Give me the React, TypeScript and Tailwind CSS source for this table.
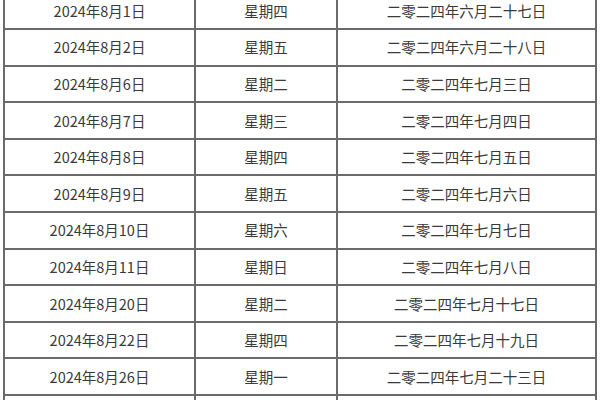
import React from 'react';

const rows = [
  ['2024年8月1日', '星期四', '二零二四年六月二十七日'],
  ['2024年8月2日', '星期五', '二零二四年六月二十八日'],
  ['2024年8月6日', '星期二', '二零二四年七月三日'],
  ['2024年8月7日', '星期三', '二零二四年七月四日'],
  ['2024年8月8日', '星期四', '二零二四年七月五日'],
  ['2024年8月9日', '星期五', '二零二四年七月六日'],
  ['2024年8月10日', '星期六', '二零二四年七月七日'],
  ['2024年8月11日', '星期日', '二零二四年七月八日'],
  ['2024年8月20日', '星期二', '二零二四年七月十七日'],
  ['2024年8月22日', '星期四', '二零二四年七月十九日'],
  ['2024年8月26日', '星期一', '二零二四年七月二十三日'],
  ['', '', ''],
];

const App = () => {
  return (
    <div className="bg-white w-[600px] h-[400px] overflow-hidden">
      {/* date table */}
      <div
        className="ml-[3px] mt-[-8.6px] w-[594px] border-2 border-b-0 border-[#6a6a6a] text-[14.5px] text-[#3a3a3a]"
        style={{ fontFamily: '"Noto Sans CJK SC", "Liberation Sans", sans-serif' }}
      >
        {rows.map((r, i) => (
          <div key={i} className="flex h-[36.6px] border-b-2 border-[#6a6a6a]">
            <div className="w-[191px] flex items-center justify-center border-r-2 border-[#6a6a6a]">{r[0]}</div>
            <div className="w-[142px] flex items-center justify-center border-r-2 border-[#6a6a6a]">{r[1]}</div>
            <div className="flex-1 flex items-center justify-center">{r[2]}</div>
          </div>
        ))}
      </div>
    </div>
  );
};

export default App;
